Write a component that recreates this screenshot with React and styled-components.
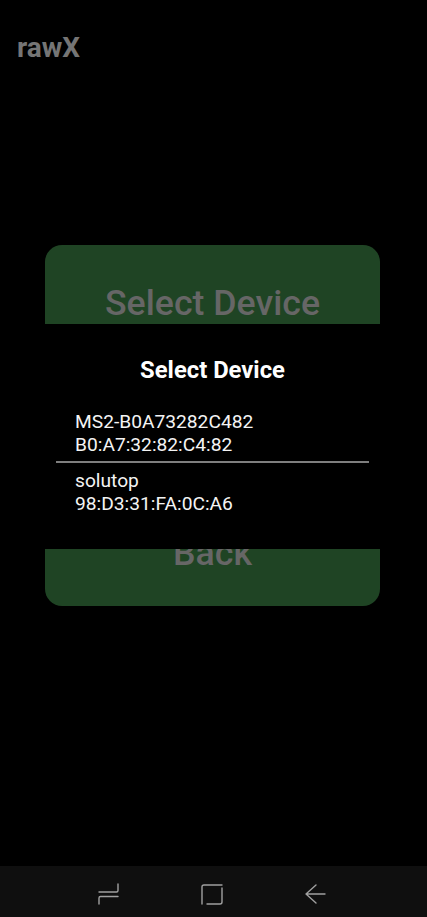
import React from "react";
import styled, { createGlobalStyle } from "styled-components";

const Global = createGlobalStyle`
  html, body { margin: 0; padding: 0; background: #000; }
  body { font-family: Roboto, "Liberation Sans", sans-serif; }
`;

const Screen = styled.div`
  position: relative;
  width: 427px;
  height: 917px;
  overflow: hidden;
  display: flex;
  flex-direction: column;
  background: #000;
`;

const AppBar = styled.header`
  height: 96px;
  padding: 33px 0 0 17px;
  box-sizing: border-box;
  color: #757575;
  font-size: 28px;
  line-height: 30px;
  font-weight: 700;
`;

const Main = styled.main`
  flex: 1;
  padding: 149px 47px 0 45px;
`;

const Card = styled.section`
  height: 361px;
  border-radius: 17px;
  background: #1f4424;
  display: flex;
  flex-direction: column;
  align-items: center;
  justify-content: space-between;
  padding: 35px 0 30px;
  box-sizing: border-box;
  color: #666666;
  font-size: 35.7px;
  line-height: 46px;
  font-weight: 500;
`;

const Dialog = styled.div`
  position: absolute;
  left: 27px;
  top: 324px;
  width: 371px;
  height: 225px;
  background: #000;
  border-radius: 2px;
  box-sizing: border-box;
  padding: 32px 29px 0;
  color: #fff;
`;

const DialogTitle = styled.h2`
  margin: 0 0 27px;
  text-align: center;
  font-size: 23.8px;
  line-height: 28px;
  font-weight: 700;
`;

const DeviceRow = styled.div`
  padding: ${(p) => (p.$last ? "7px" : "0")} 0 ${(p) => (p.$last ? "0" : "5px")} 19px;
  font-size: 19.2px;
  line-height: 22.7px;
  border-bottom: ${(p) => (p.$last ? "none" : "2px solid #7e7e7e")};
  color: #f4f4f4;
`;

const NavBar = styled.nav`
  height: 51px;
  background: #0f0f0f;
  display: flex;
  align-items: center;
  color: #a0a0a0;
  padding: 3px 0 0 97px;
  box-sizing: border-box;
  gap: 79px;
`;

const NavIcon = styled.svg`
  width: 24px;
  height: 24px;
  fill: none;
  stroke: currentColor;
  stroke-width: 1.4;
  stroke-linecap: round;
  stroke-linejoin: round;
  flex: none;
`;

const devices = [
  ["MS2-B0A73282C482", "B0:A7:32:82:C4:82"],
  ["solutop", "98:D3:31:FA:0C:A6"],
];

export default function App() {
  return (
    <Screen>
      <Global />
      <AppBar>rawX</AppBar>
      <Main>
        <Card>
          <span>Select Device</span>
          <span>Back</span>
        </Card>
      </Main>
      <Dialog>
        <DialogTitle>Select Device</DialogTitle>
        {devices.map(([name, addr], i) => (
          <DeviceRow key={addr} $last={i === devices.length - 1}>
            {name}
            <br />
            {addr}
          </DeviceRow>
        ))}
      </Dialog>
      <NavBar>
        <NavIcon viewBox="0 0 24 24">
          <path d="M21 3v6.500q0 1.500-1.500 1.500H2M21 15.500H3.500Q2 15.500 2 17v6" />
        </NavIcon>
        <NavIcon viewBox="0 0 24 24">
          <path d="M22 4H4Q2 4 2 6V23M7 23H20q2 0 2-2V7" />
        </NavIcon>
        <NavIcon viewBox="0 0 24 24">
          <path d="M3 13H22M13 4 3 13l10 9" />
        </NavIcon>
      </NavBar>
    </Screen>
  );
}
